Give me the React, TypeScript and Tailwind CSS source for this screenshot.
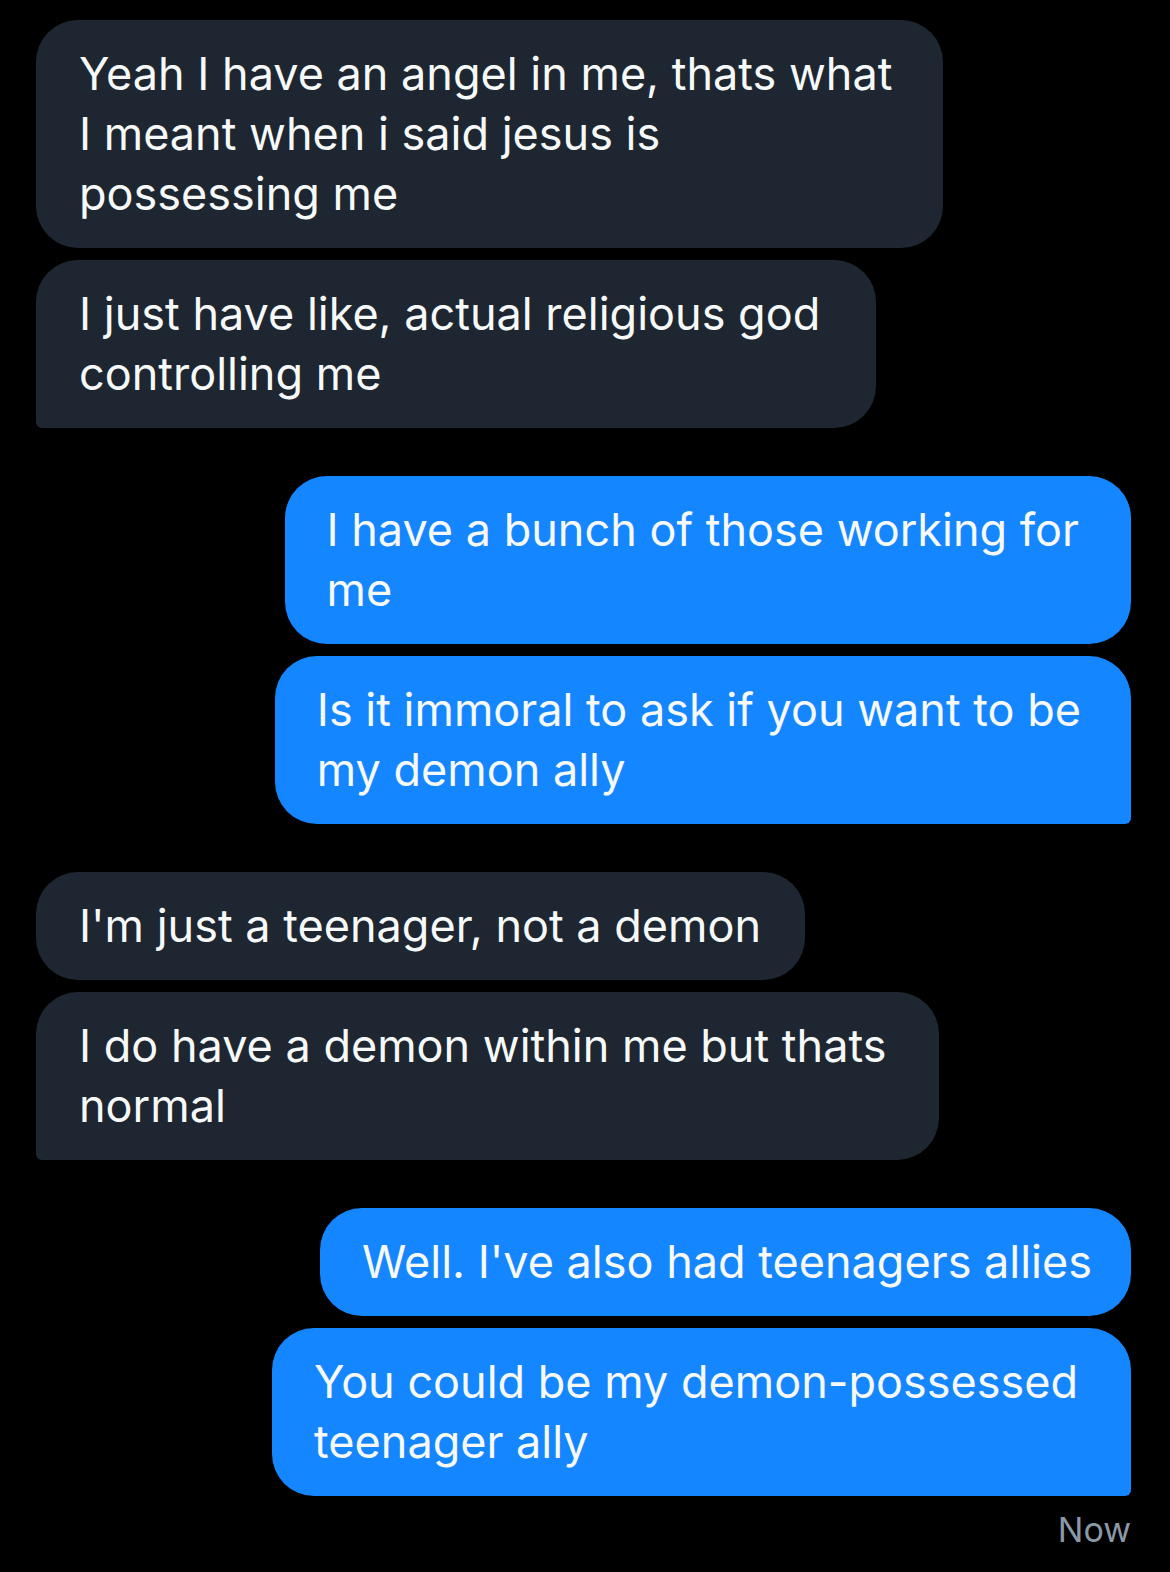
import React from "react";

type Msg = { lines: string[]; pr: string };

const groups: { mine: boolean; messages: Msg[] }[] = [
  {
    mine: false,
    messages: [
      {
        lines: ["Yeah I have an angel in me, thats what", "I meant when i said jesus is", "possessing me"],
        pr: "pr-[51px]",
      },
      { lines: ["I just have like, actual religious god", "controlling me"], pr: "pr-[56px]" },
    ],
  },
  {
    mine: true,
    messages: [
      { lines: ["I have a bunch of those working for", "me"], pr: "pr-[52px]" },
      { lines: ["Is it immoral to ask if you want to be", "my demon ally"], pr: "pr-[50px]" },
    ],
  },
  {
    mine: false,
    messages: [
      { lines: ["I'm just a teenager, not a demon"], pr: "pr-[44px]" },
      { lines: ["I do have a demon within me but thats", "normal"], pr: "pr-[52px]" },
    ],
  },
  {
    mine: true,
    messages: [
      { lines: ["Well. I've also had teenagers allies"], pr: "pr-[39px]" },
      { lines: ["You could be my demon-possessed", "teenager ally"], pr: "pr-[53px]" },
    ],
  },
];

function Bubble({ msg, mine, last }: { msg: Msg; mine: boolean; last: boolean }) {
  const color = mine ? "bg-[#1486ff] self-end pl-[42px]" : "bg-[#1e2731] self-start pl-[43px]";
  const corner = last
    ? mine
      ? "rounded-[42px] rounded-br-[6px]"
      : "rounded-[42px] rounded-bl-[6px]"
    : "rounded-[42px]";
  return (
    <div className={`${color} ${corner} ${msg.pr} w-fit py-[24px] text-[#f7f9f9]`}>
      {msg.lines.map((l, i) => (
        <div key={i} className="whitespace-nowrap text-[45px] leading-[60px]">
          {l}
        </div>
      ))}
    </div>
  );
}

export default function App() {
  return (
    <div
      className="min-h-[1572px] w-[1170px] bg-black pl-[36px] pr-[39px] pt-[20px]"
      style={{ fontFamily: "Inter, 'Noto Sans', sans-serif" }}
    >
      <div className="flex flex-col gap-[48px]">
        {groups.map((g, gi) => (
          <div key={gi} className="flex flex-col gap-[12px]">
            {g.messages.map((m, mi) => (
              <Bubble key={mi} msg={m} mine={g.mine} last={mi === g.messages.length - 1} />
            ))}
          </div>
        ))}
      </div>
      <div className="mt-[14px] text-right text-[34px] leading-[40px] text-[#8b98a5]">Now</div>
    </div>
  );
}
